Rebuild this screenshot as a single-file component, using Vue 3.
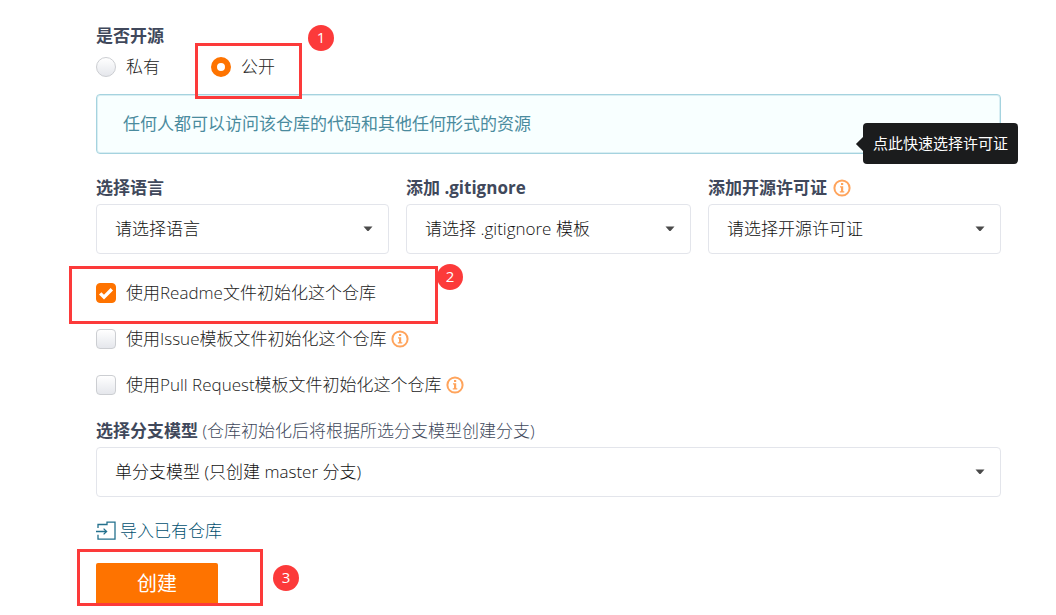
<script setup>
import { ref } from 'vue'

const visibility = ref('public')
const language = ref('')
const gitignore = ref('')
const license = ref('')
const branchModel = ref('single')
const initOptions = ref([
  { id: 'readme', label: '使用Readme文件初始化这个仓库', checked: true, info: false },
  { id: 'issue', label: '使用Issue模板文件初始化这个仓库', checked: false, info: true },
  { id: 'pull', label: '使用Pull Request模板文件初始化这个仓库', checked: false, info: true },
])
</script>

<template>
  <form class="page" @submit.prevent>
    <fieldset class="visibility">
      <legend class="title">是否开源</legend>
      <div class="radios">
        <label class="choice">
          <input v-model="visibility" type="radio" name="visibility" value="private" />
          <span>私有</span>
        </label>
        <label class="choice marked">
          <input v-model="visibility" type="radio" name="visibility" value="public" />
          <span>公开</span>
          <i class="frame frame-public"></i>
          <b class="badge badge-public">1</b>
        </label>
      </div>
    </fieldset>

    <p class="notice">任何人都可以访问该仓库的代码和其他任何形式的资源</p>

    <div class="columns">
      <div class="field">
        <label class="title" for="language">选择语言</label>
        <div class="select">
          <select id="language" v-model="language"><option value="">请选择语言</option></select>
          <svg class="caret" viewBox="0 0 10 6"><path d="M0.5 0.5h9L5.8 4.7q-.8.8-1.6 0z" /></svg>
        </div>
      </div>
      <div class="field">
        <label class="title" for="gitignore">添加 .gitignore</label>
        <div class="select">
          <select id="gitignore" v-model="gitignore"><option value="">请选择 .gitignore 模板</option></select>
          <svg class="caret" viewBox="0 0 10 6"><path d="M0.5 0.5h9L5.8 4.7q-.8.8-1.6 0z" /></svg>
        </div>
      </div>
      <div class="field">
        <div class="title-row">
          <label class="title" for="license">添加开源许可证</label>
          <span class="hint">
            <svg class="info" viewBox="0 0 18 18">
              <circle cx="9" cy="9" r="7.6" />
              <path d="M8 4h2.2v2H8zM7 7.3h3.2v4.9h1.1v1.3H6.8v-1.3H8V8.6H7z" />
            </svg>
            <span class="tooltip" role="tooltip">点此快速选择许可证</span>
          </span>
        </div>
        <div class="select">
          <select id="license" v-model="license"><option value="">请选择开源许可证</option></select>
          <svg class="caret" viewBox="0 0 10 6"><path d="M0.5 0.5h9L5.8 4.7q-.8.8-1.6 0z" /></svg>
        </div>
      </div>
    </div>

    <div class="checks">
      <div v-for="option in initOptions" :key="option.id" class="check-row">
        <label class="choice">
          <span class="box">
            <input v-model="option.checked" type="checkbox" />
            <svg v-if="option.checked" class="tick" viewBox="0 0 20 20"><path d="M4.2 10.4l3.8 3.8 7.8-8" /></svg>
          </span>
          <span>{{ option.label }}</span>
        </label>
        <svg v-if="option.info" class="info" viewBox="0 0 18 18">
          <circle cx="9" cy="9" r="7.6" />
          <path d="M8 4h2.2v2H8zM7 7.3h3.2v4.9h1.1v1.3H6.8v-1.3H8V8.6H7z" />
        </svg>
      </div>
      <i class="frame frame-readme"></i>
      <b class="badge badge-readme">2</b>
    </div>

    <div class="field branch">
      <label class="title" for="branch">选择分支模型 <span class="note">(仓库初始化后将根据所选分支模型创建分支)</span></label>
      <div class="select">
        <select id="branch" v-model="branchModel"><option value="single">单分支模型 (只创建 master 分支)</option></select>
        <svg class="caret" viewBox="0 0 10 6"><path d="M0.5 0.5h9L5.8 4.7q-.8.8-1.6 0z" /></svg>
      </div>
    </div>

    <a class="import" href="#">
      <svg viewBox="0 0 21 20"><path d="M2 7V3.5h9V1.2h8v17H2v-4.4M0 10.5h10.5M7.6 7.6l3 2.9-3 2.9" /></svg>
      <span>导入已有仓库</span>
    </a>

    <div class="submit">
      <button type="submit">创建</button>
      <i class="frame frame-submit"></i>
      <b class="badge badge-submit">3</b>
    </div>
  </form>
</template>

<style>
body {
  margin: 0;
  background: #fff;
}
</style>

<style scoped>
* {
  box-sizing: border-box;
}
.page {
  padding: 24px 55px 10px 96px;
  font-family: "Open Sans", "Noto Sans CJK SC", sans-serif;
  font-size: 17px;
  line-height: 24px;
  color: #40485b;
}
.visibility {
  margin: 0;
  padding: 0;
  border: 0;
}
.title {
  display: block;
  padding: 0;
  font-weight: 700;
  white-space: nowrap;
}
.radios {
  display: flex;
  gap: 51px;
  padding-top: 7px;
}
.choice {
  display: flex;
  align-items: center;
  gap: 10px;
  color: #222;
  font-weight: 300;
  white-space: nowrap;
}
.marked {
  position: relative;
}
input {
  appearance: none;
  flex: none;
  display: block;
  width: 20px;
  height: 20px;
  margin: 0;
  border: 1px solid #ccced2;
  background: linear-gradient(#fff, #e5e7ec);
}
input[type="radio"] {
  border-radius: 50%;
}
input[type="checkbox"] {
  border-radius: 4px;
}
input:checked {
  border-color: #fe7300;
  background: #fe7300;
}
input[type="radio"]:checked {
  border-width: 6px;
  background: #fff;
}
.box {
  position: relative;
}
.tick {
  position: absolute;
  inset: 0;
  fill: none;
  stroke: #fff;
  stroke-width: 3.4;
  pointer-events: none;
}
.notice {
  margin: 15px 0 0;
  padding: 17px 26px;
  border: 1px solid #a5d3df;
  border-radius: 4px;
  background: #f8ffff;
  box-shadow: inset 0 0 0 1px #d9eef3;
  color: #4a8b9e;
}
.columns {
  display: grid;
  grid-template-columns: 293fr 285fr 293fr;
  gap: 17px;
  margin-top: 22px;
}
.field {
  display: flex;
  flex-direction: column;
  gap: 4px;
  min-width: 0;
}
.title-row {
  display: flex;
  align-items: center;
  gap: 6px;
}
.hint {
  position: relative;
  display: flex;
}
.info {
  flex: none;
  width: 18px;
  height: 18px;
  fill: #ffa45c;
}
.info circle {
  fill: none;
  stroke: #ffa45c;
  stroke-width: 2;
}
.tooltip {
  position: absolute;
  left: 30px;
  bottom: 33px;
  padding: 8px 10px 9px;
  border-radius: 4px;
  background: #1b1c1d;
  color: #fff;
  font-size: 15px;
  white-space: nowrap;
}
.tooltip::before {
  content: "";
  position: absolute;
  left: -5px;
  top: 16px;
  width: 10px;
  height: 10px;
  background: #1b1c1d;
  transform: rotate(45deg);
}
.select {
  display: grid;
  align-items: center;
}
.select > * {
  grid-area: 1 / 1;
}
select {
  appearance: none;
  width: 100%;
  height: 50px;
  padding: 0 40px 0 18px;
  border: 1px solid #e3e5eb;
  border-radius: 4px;
  background: #fff;
  color: #111;
  font: inherit;
  font-weight: 300;
}
.caret {
  justify-self: end;
  width: 10px;
  height: 6px;
  margin-right: 16px;
  fill: #4a4a4a;
  pointer-events: none;
}
.checks {
  position: relative;
  display: flex;
  flex-direction: column;
  gap: 22px;
  margin-top: 27px;
}
.check-row {
  display: flex;
  align-items: center;
  gap: 4px;
}
.branch {
  margin-top: 22px;
}
.note {
  font-weight: 300;
}
.import {
  display: flex;
  width: fit-content;
  align-items: center;
  gap: 3px;
  margin-top: 22px;
  color: #00506f;
  font-weight: 300;
  text-decoration: none;
}
.import svg {
  width: 21px;
  height: 20px;
  fill: none;
  stroke: #23708d;
  stroke-width: 1.3;
}
.submit {
  position: relative;
  margin-top: 20px;
}
button {
  display: block;
  width: 122px;
  height: 42px;
  padding: 0;
  border: 0;
  border-radius: 2px 2px 0 0;
  background: #fe7300;
  color: #fff;
  font-family: inherit;
  font-size: 20px;
  line-height: 42px;
}
.frame {
  position: absolute;
  border: 3px solid #fc3a3a;
  pointer-events: none;
}
.badge {
  position: absolute;
  width: 26px;
  height: 26px;
  border-radius: 50%;
  background: #fc3a3a;
  color: #fff;
  font-size: 15px;
  font-weight: 400;
  line-height: 24px;
  text-align: center;
}
.frame-public {
  inset: -12px -27px -20px -16px;
}
.badge-public {
  top: -30px;
  left: 97px;
}
.frame-readme {
  top: -15px;
  left: -27px;
  width: 369px;
  height: 58px;
}
.badge-readme {
  top: -17px;
  left: 341px;
}
.frame-submit {
  top: -14px;
  left: -19px;
  width: 186px;
  height: 57px;
}
.badge-submit {
  top: 2px;
  left: 177px;
}
</style>
